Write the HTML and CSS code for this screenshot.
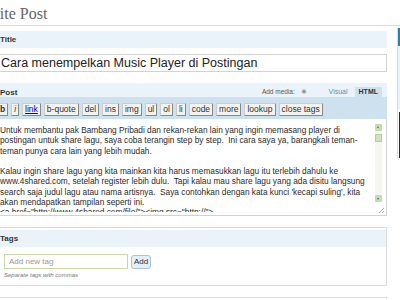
FILE: index.html
```html
<!DOCTYPE html>
<html lang="id">

<head>
  <meta charset="UTF-8">
  <meta name="viewport" content="width=device-width, initial-scale=1.0">
  <title>Write Post</title>

  <link rel="stylesheet" href="styles.css">
</head>

<body>
  <div id="wrap">
    <h2 class="page-title">Write Post</h2>

    <div id="layout">
      <div id="main">
        <div class="band">Title</div>
        <input type="text" class="title-input" value="Cara menempelkan Music Player di Postingan">

        <div class="band post-band">
          <span class="band-label">Post</span>
          <span class="media">Add media: <span class="media-icon">&#10041;</span></span>
          <span class="tab">Visual</span>
          <span class="tab active">HTML</span>
        </div>

        <div class="toolbar">
          <button class="ed-btn"><b>b</b></button>
          <button class="ed-btn"><i>i</i></button>
          <button class="ed-btn link">link</button>
          <button class="ed-btn">b-quote</button>
          <button class="ed-btn">del</button>
          <button class="ed-btn">ins</button>
          <button class="ed-btn">img</button>
          <button class="ed-btn">ul</button>
          <button class="ed-btn">ol</button>
          <button class="ed-btn">li</button>
          <button class="ed-btn">code</button>
          <button class="ed-btn">more</button>
          <button class="ed-btn">lookup</button>
          <button class="ed-btn">close tags</button>
        </div>

        <div class="editor">
          <textarea class="content" wrap="off">Untuk membantu pak Bambang Pribadi dan rekan-rekan lain yang ingin memasang player di
postingan untuk share lagu, saya coba terangin step by step.  Ini cara saya ya, barangkali teman-
teman punya cara lain yang lebih mudah.

Kalau ingin share lagu yang kita mainkan kita harus memasukkan lagu itu terlebih dahulu ke
www.4shared.com, setelah register lebih dulu.  Tapi kalau mau share lagu yang ada disitu langsung
search saja judul lagu atau nama artisnya.  Saya contohkan dengan kata kunci 'kecapi suling', kita
akan mendapatkan tampilan seperti ini.
&lt;a href="http://www.4shared.com/file/"&gt;&lt;img src="http://"&gt;</textarea>
          <div class="scrollbar">
            <span class="arrow up"></span>
            <span class="thumb"></span>
            <span class="track"></span>
            <span class="arrow down"></span>
          </div>
          <span class="grip"></span>
        </div>

        <div class="box">
          <div class="band">Tags</div>
          <div class="box-body">
            <div class="tag-row">
              <input type="text" class="tag-input" placeholder="Add new tag">
              <button class="add-btn">Add</button>
            </div>
            <p class="howto">Separate tags with commas</p>
          </div>
        </div>

        <div class="box next"></div>
      </div>

      <div id="side">
        <div class="side-box">
          <div class="side-head"></div>
          <div class="side-body"></div>
          <div class="side-dark"></div>
        </div>
      </div>
    </div>
  </div>
</body>

</html>
```

FILE: styles.css
```css
html,
body {
  margin: 0;
  overflow: hidden;
  background: #fff;
}

#wrap {
  width: 420px;
  margin-left: -20px;
  font-family: "Liberation Sans", Arial, sans-serif;
  color: #333;
}

.page-title {
  margin: 0;
  height: 26px;
  padding-top: 5px;
  box-sizing: border-box;
  font-family: "Liberation Serif", serif;
  font-size: 16px;
  font-weight: normal;
  color: #666;
  border-bottom: 1px solid #dadada;
}

#layout {
  display: grid;
  grid-template-columns: 393px 1fr;
  column-gap: 10px;
  padding-left: 14px;
  margin-top: 5px;
}

#main {
  display: flex;
  flex-direction: column;
}

.band {
  height: 17px;
  padding-left: 6px;
  box-sizing: border-box;
  background: #eaf3fa;
  font-size: 8px;
  font-weight: bold;
  line-height: 17px;
  color: #333;
}

.title-input {
  margin-top: 6px;
  height: 18px;
  padding: 0 6px;
  box-sizing: border-box;
  border: 1px solid #d2d2d2;
  font-family: "Liberation Sans", Arial, sans-serif;
  font-size: 12.5px;
  color: #222;
  outline: none;
}

.post-band {
  margin-top: 11px;
  height: 14px;
  display: flex;
  align-items: flex-end;
  padding-right: 5px;
  line-height: normal;
}

.band-label {
  flex: 1;
  align-self: center;
  padding-top: 5px;
}

.media {
  font-size: 6.5px;
  font-weight: normal;
  color: #555;
  margin-bottom: 1px;
  margin-right: 18px;
}

.media-icon {
  font-size: 7px;
  color: #999;
  margin-left: 4px;
}

.tab {
  height: 10px;
  padding: 0 4px;
  font-size: 7px;
  line-height: 10px;
  font-weight: normal;
  color: #5b8fb8;
}

.tab.active {
  margin-left: 3px;
  background: #cee1ef;
  font-weight: bold;
  color: #333;
}

.toolbar {
  display: flex;
  gap: 3px;
  height: 22px;
  padding: 6px 3px 0;
  box-sizing: border-box;
  background: #cee1ef;
}

.ed-btn {
  height: 13px;
  padding: 0 2px;
  margin: 0;
  border: 1px solid #999;
  border-color: #ccc #888 #888 #ccc;
  border-radius: 1px;
  background: #f2f2ee;
  font-family: "Liberation Sans", Arial, sans-serif;
  font-size: 8.5px;
  line-height: 11px;
  color: #333;
}

.ed-btn.link {
  color: #00c;
  text-decoration: underline;
}

.editor {
  position: relative;
  display: flex;
  height: 97px;
  padding-bottom: 3px;
  box-sizing: border-box;
  border: 1px solid #d2d2d2;
  border-top: none;
  background: #fff;
}

.content {
  flex: 1;
  margin: 0;
  padding: 6px 0 0 5px;
  border: none;
  resize: none;
  overflow: hidden;
  font-family: "Liberation Sans", Arial, sans-serif;
  font-size: 8.3px;
  line-height: 10.3px;
  color: #2a2a2a;
  outline: none;
}

.scrollbar {
  display: flex;
  flex-direction: column;
  width: 7px;
  margin: 5px 4px 10px 3px;
  background: #f6f6f0;
}

.arrow {
  height: 7px;
  background: #c4dcae;
  border-radius: 1px;
  position: relative;
}

.arrow::after {
  content: "";
  position: absolute;
  left: 2px;
  width: 0;
  height: 0;
  border-left: 1.5px solid transparent;
  border-right: 1.5px solid transparent;
}

.arrow.up::after {
  top: 2px;
  border-bottom: 2px solid #4d6fa0;
}

.arrow.down::after {
  top: 3px;
  border-top: 2px solid #4d6fa0;
}

.thumb {
  height: 8px;
  margin-top: 3px;
  background: #cfe2bb;
  border: 1px solid #b6cd9c;
  box-sizing: border-box;
}

.track {
  flex: 1;
}

.grip {
  position: absolute;
  right: 2px;
  bottom: 2px;
  width: 5px;
  height: 5px;
  background: linear-gradient(135deg, transparent 45%, #aaa 45%, #aaa 55%, transparent 55%, transparent 75%, #aaa 75%, #aaa 85%, transparent 85%);
}

.box {
  margin-top: 11px;
  border: 1px solid #dcdcdc;
  border-left: none;
  padding-top: 2px;
}

.box-body {
  height: 38px;
  padding: 7px 0 0 10px;
  box-sizing: border-box;
}

.tag-row {
  display: flex;
  align-items: center;
  gap: 3px;
}

.tag-input {
  width: 124px;
  height: 15px;
  padding: 0 4px;
  box-sizing: border-box;
  border: 1px solid #cdd6a8;
  font-family: "Liberation Sans", Arial, sans-serif;
  font-size: 8px;
  outline: none;
}

.tag-input::placeholder {
  color: #999;
}

.add-btn {
  height: 14px;
  width: 20px;
  padding: 0;
  border: 1px solid #a9c3d8;
  border-radius: 3px;
  background: #e3eef6;
  font-family: "Liberation Sans", Arial, sans-serif;
  font-size: 8px;
  color: #333;
}

.howto {
  margin: 3px 0 0;
  font-size: 6px;
  font-style: italic;
  color: #777;
}

.box.next {
  margin-top: 11px;
  height: 20px;
  padding: 0;
}

.side-box {
  border-left: 1px solid #dcdcdc;
}

.side-head {
  height: 18px;
  margin-top: -3px;
  background: #2583ad;
}

.side-body {
  height: 63px;
  background: #eaf3fa;
}

.side-dark {
  height: 46px;
  margin-top: 3px;
  margin-left: 1px;
  background: #2b2b2b;
}
```
